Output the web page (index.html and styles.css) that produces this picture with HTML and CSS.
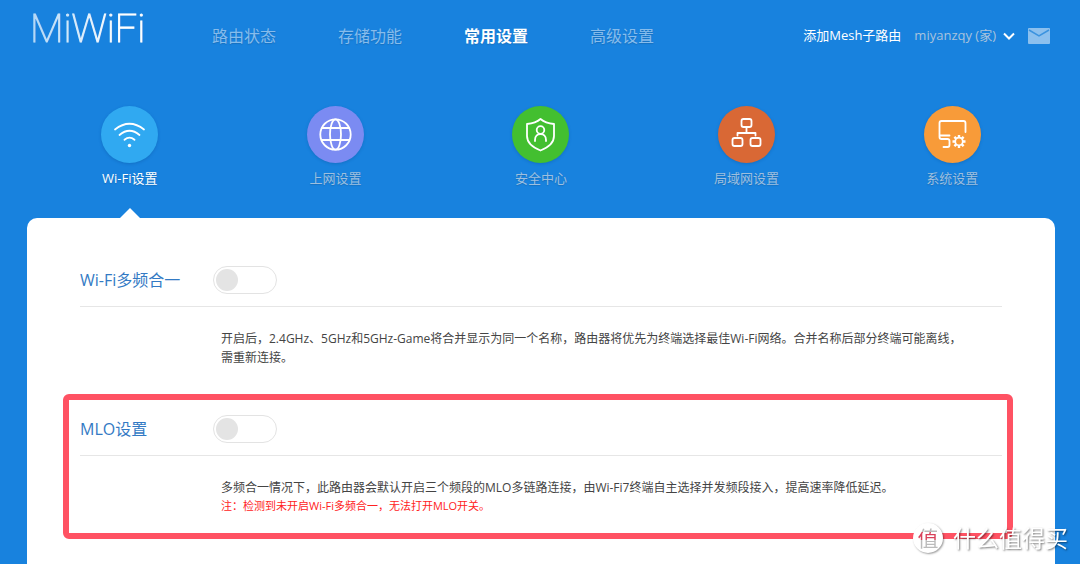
FILE: index.html
```html
<!DOCTYPE html>
<html lang="zh-CN">
<head>
<meta charset="utf-8">
<meta name="viewport" content="width=device-width, initial-scale=1">
<title>MiWiFi</title>
<link rel="stylesheet" href="styles.css">
</head>
<body>
<header class="header">
  <a class="logo" href="#">MiWiFi</a>
  <nav class="nav">
    <a href="#">路由状态</a>
    <a href="#">存储功能</a>
    <a class="active" href="#" aria-current="page">常用设置</a>
    <a href="#">高级设置</a>
  </nav>
  <div class="account">
    <a class="mesh" href="#">添加Mesh子路由</a>
    <button class="user" type="button">miyanzqy (家)
      <svg width="12" height="8" viewBox="0 0 12 8" fill="none" stroke="#fff" stroke-width="2"><path d="M1 1.5l5 5 5-5"/></svg>
    </button>
    <a class="mail" href="#" aria-label="消息">
      <svg width="22" height="16" viewBox="0 0 22 16"><rect width="22" height="16" rx="1" fill="#8cc0ee"/><path d="M1 2l10 6 10-6" fill="none" stroke="#3b93df" stroke-width="1.5"/></svg>
    </a>
  </div>
</header>

<nav class="tabs">
  <a class="tab active" href="#" aria-current="page">
    <span class="disc wifi"><svg viewBox="0 0 57 57"><path d="M14 23.500Q28.500 12 43 23.500M18.500 29Q28.500 20.500 38.500 29M23.500 33.800Q28.500 29.500 33.500 33.800"/><circle class="solid" cx="28.500" cy="39.500" r="1.700"/></svg></span>
    <span>Wi-Fi设置</span>
  </a>
  <a class="tab" href="#">
    <span class="disc wan"><svg viewBox="0 0 57 57"><circle cx="28.500" cy="28.500" r="15.200"/><ellipse cx="28.500" cy="28.500" rx="5.500" ry="15.200"/><path d="M15 22h27M15 34h27"/></svg></span>
    <span>上网设置</span>
  </a>
  <a class="tab" href="#">
    <span class="disc safe"><svg viewBox="0 0 57 57"><path d="M28.500 13C25 16 20 17.500 15 18v12c0 7 6 11.500 13.500 14.500C36 41.500 42 37 42 30V18c-5-.5-10-2-13.500-5z"/><circle cx="28.500" cy="24" r="3.800"/><path d="M23 35v-1c0-8 11-8 11 0v1"/></svg></span>
    <span>安全中心</span>
  </a>
  <a class="tab" href="#">
    <span class="disc lan"><svg viewBox="0 0 57 57"><rect x="23.500" y="13" width="10" height="8" rx="2"/><rect x="14.500" y="32" width="10" height="8" rx="2"/><rect x="32.500" y="32" width="10" height="8" rx="2"/><path d="M28.500 21v6M19.500 29.500V27h18v2.500"/></svg></span>
    <span>局域网设置</span>
  </a>
  <a class="tab" href="#">
    <span class="disc system"><svg viewBox="0 0 57 57"><path d="M41.500 26V17q0-2-2-2h-22q-2 0-2 2v12.500h10M15.500 29.500v1.500q0 2 2 2h6q2 0 2 2v4q0 2-2 2h-4"/><circle cx="35" cy="35.500" r="3.800"/><path class="teeth" d="M35 31.500V29M35 42v-2.500M31 35.500h-2.500M41.500 35.500H39M32.200 32.700l-1.800-1.800M39.600 40.100l-1.800-1.800M32.200 38.300l-1.800 1.800M39.600 30.900l-1.800 1.800"/></svg></span>
    <span>系统设置</span>
  </a>
</nav>

<main class="panel">
  <section class="setting">
    <div class="setting-head">
      <label for="merge">Wi-Fi多频合一</label>
      <input id="merge" class="switch" type="checkbox" role="switch">
    </div>
    <p class="desc">开启后，2.4GHz、5GHz和5GHz-Game将合并显示为同一个名称，路由器将优先为终端选择最佳Wi-Fi网络。合并名称后部分终端可能离线，需重新连接。</p>
  </section>
  <section class="setting marked">
    <div class="setting-head">
      <label for="mlo">MLO设置</label>
      <input id="mlo" class="switch" type="checkbox" role="switch">
    </div>
    <p class="desc">多频合一情况下，此路由器会默认开启三个频段的MLO多链路连接，由Wi-Fi7终端自主选择并发频段接入，提高速率降低延迟。</p>
    <p class="note">注：检测到未开启Wi-Fi多频合一，无法打开MLO开关。</p>
  </section>
</main>
<div class="watermark"><span class="seal"><span class="seal-char">值</span></span><span>什么值得买</span></div>
</body>
</html>
```
FILE: styles.css
```css
* { box-sizing: border-box; }
body {
  margin: 0;
  min-height: 100vh;
  display: flex;
  flex-direction: column;
  background: #1882de;
  color: #444;
  font: 12px/19px "Open Sans", "Noto Sans CJK SC", sans-serif;
}
a { color: inherit; text-decoration: none; }
p { margin: 0; }

.header {
  display: flex;
  align-items: center;
  height: 71px;
  padding: 0 30px;
  color: #86bcec;
}
.logo {
  width: 182px;
  padding-bottom: 14px;
  font: 100 39px/48px Roboto, sans-serif;
  background: linear-gradient(90deg, #8fc4f2, #fff 90px);
  background-clip: text;
  color: transparent;
  -webkit-text-stroke: 1px #ffffff50;
}
.nav { display: flex; gap: 62px; font-size: 16px; line-height: 24px; }
.nav a { white-space: nowrap; text-shadow: 0 1px 1px #1670bf; }
.nav .active { color: #fff; font-weight: 700; }
.account { display: flex; align-items: center; margin-left: auto; gap: 13px; font-size: 13px; white-space: nowrap; }
.mesh { color: #fff; }
.user {
  display: flex;
  align-items: center;
  gap: 7px;
  padding: 0;
  border: 0;
  background: none;
  color: #a9c3dc;
  font: inherit;
}
.mail svg { display: block; }

.tabs { display: flex; margin: 0 25px 0 27px; padding-top: 35px; }
.tab {
  position: relative;
  flex: 1;
  display: flex;
  flex-direction: column;
  align-items: center;
  gap: 6px;
  height: 112px;
  color: #9dbfdf;
  font-size: 13px;
  text-shadow: 0 1px 1px #1670bf;
}
.tab.active { color: #fff; }
.tab.active::after {
  content: "";
  position: absolute;
  bottom: 0;
  border: solid transparent;
  border-width: 0 10px 10px;
  border-bottom-color: #fff;
}
.disc { width: 57px; height: 57px; border-radius: 50%; box-shadow: 0 1px 3px #0d58a066; }
.disc svg { display: block; fill: none; stroke: #fff; stroke-width: 1.8; stroke-linecap: round; stroke-linejoin: round; }
.disc .solid { fill: #fff; stroke: none; }
.disc .teeth { stroke-width: 2.4; stroke-linecap: butt; }
.wifi { background: #30a9f1; }
.wan { background: #7b8bf2; }
.safe { background: #43bf30; }
.lan { background: #d96835; }
.system { background: #f89b39; }

.panel {
  flex: 1;
  display: flex;
  flex-direction: column;
  gap: 48px;
  margin: 0 25px 0 27px;
  padding: 48px 53px 20px;
  border-radius: 10px 10px 0 0;
  background: #fff;
}
.setting { position: relative; }
.setting-head {
  display: grid;
  grid-template-columns: 133px 1fr;
  align-items: center;
  padding-bottom: 12px;
  border-bottom: 1px solid #e6e6e6;
  color: #337ac4;
  font-size: 16px;
}
.switch {
  appearance: none;
  width: 64px;
  height: 28px;
  margin: 0;
  padding: 2px;
  border: 1px solid #e3e3e3;
  border-radius: 14px;
  background: #fff;
}
.switch::before {
  content: "";
  display: block;
  width: 22px;
  height: 22px;
  border-radius: 50%;
  background: #e4e4e4;
}
.switch:checked::before { margin-left: auto; background: #30a9f1; }
.desc { padding: 22px 36px 0 141px; }
.note { padding-left: 141px; color: #f22; font-size: 11px; line-height: 17px; }
.marked::after {
  content: "";
  position: absolute;
  inset: -21px -11px -25px -17px;
  border: 6px solid #ff5263;
  border-radius: 6px;
  pointer-events: none;
}

.watermark {
  position: fixed;
  right: 12px;
  bottom: 10px;
  display: flex;
  align-items: center;
  gap: 10px;
  color: #fff;
  font-size: 23px;
  line-height: 32px;
  text-shadow: 1px 1px 2px #0008;
  pointer-events: none;
}
.seal {
  width: 30px;
  height: 30px;
  border-radius: 50%;
  box-shadow: 1px 1px 2px #0006;
  background: #fff;
  font-size: 21px;
  line-height: 30px;
  text-align: center;
  text-shadow: none;
}
.seal-char {
  display: block;
  background: linear-gradient(#bbb 9px, #d8415a 9px, #d8415a 17px, #bbb 17px);
  background-clip: text;
  color: transparent;
}
```
